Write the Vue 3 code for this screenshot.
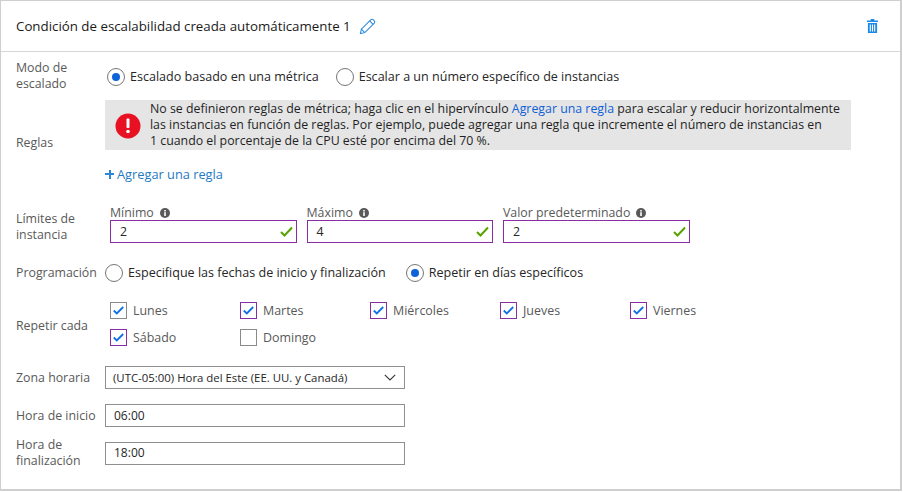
<script setup>
const days = [
  { name: 'Lunes', on: true, touched: false },
  { name: 'Martes', on: true, touched: true },
  { name: 'Miércoles', on: true, touched: true },
  { name: 'Jueves', on: true, touched: true },
  { name: 'Viernes', on: true, touched: true },
  { name: 'Sábado', on: true, touched: true },
  { name: 'Domingo', on: false, touched: false },
]

const limits = [
  { label: 'Mínimo', value: '2' },
  { label: 'Máximo', value: '4' },
  { label: 'Valor predeterminado', value: '2' },
]
</script>

<template>
  <div class="panel">
    <header class="panel-header">
      <span class="panel-title">Condición de escalabilidad creada automáticamente 1</span>
      <svg class="edit-icon" width="17" height="17" viewBox="0 0 18 18" fill="none" stroke="#2b88d8" stroke-width="1.1">
        <path d="M1.5 16.5l1-4.6L12.6 1.8c.7-.7 1.7-.7 2.4 0l1.2 1.2c.7.7.7 1.700 0 2.400L6.100 15.500z" />
        <path d="M11.300 3.100l3.600 3.600M2.500 11.900l3.600 3.600" />
      </svg>
      <svg class="trash-icon" width="11" height="14" viewBox="0 0 12 14" preserveAspectRatio="none" fill="#1e88e5">
        <path d="M4 0h4v1.500h4V3H0V1.500h4zM1 4h10v10H1zM3 5.500v7h1.200v-7zM5.400 5.500v7h1.200v-7zM7.800 5.500v7H9v-7z" fill-rule="evenodd" />
      </svg>
    </header>

    <div class="panel-body">
      <div class="row row-mode">
        <div class="row-label">Modo de<br />escalado</div>
        <div class="radio-group mode-radios">
          <label class="radio"><span class="radio-dot on"></span>Escalado basado en una métrica</label>
          <label class="radio"><span class="radio-dot"></span>Escalar a un número específico de instancias</label>
        </div>
      </div>

      <div class="row row-rules">
        <div class="row-label rules-label">Reglas</div>
        <div class="rules-content">
          <div class="banner">
            <svg class="banner-icon" width="26" height="26" viewBox="0 0 26 26">
              <circle cx="13" cy="13" r="12.500" fill="#e81123" />
              <rect x="11.500" y="5.500" width="3" height="9.500" rx="1" fill="#fff" />
              <circle cx="13" cy="18.500" r="1.800" fill="#fff" />
            </svg>
            <p class="banner-text">
              No se definieron reglas de métrica; haga clic en el hipervínculo <a class="link">Agregar una regla</a> para escalar y reducir horizontalmente<br />
              las instancias en función de reglas. Por ejemplo, puede agregar una regla que incremente el número de instancias en<br />
              1 cuando el porcentaje de la CPU esté por encima del 70 %.
            </p>
          </div>
          <a class="add-rule"><span class="plus"></span>Agregar una regla</a>
        </div>
      </div>

      <div class="row row-limits">
        <div class="row-label">Límites de<br />instancia</div>
        <div class="limits">
          <div v-for="(item, i) in limits" :key="i" class="limit">
            <div class="limit-label">
              {{ item.label }}
              <svg width="10" height="10" viewBox="0 0 10 10">
                <circle cx="5" cy="5" r="5" fill="#595959" />
                <rect x="4.200" y="4.200" width="1.600" height="3.800" fill="#fff" />
                <rect x="4.200" y="2" width="1.600" height="1.500" fill="#fff" />
              </svg>
            </div>
            <div class="limit-input">
              {{ item.value }}
              <svg class="check" width="13" height="11" viewBox="0 0 13 11" fill="none" stroke="#57a300" stroke-width="2">
                <path d="M1 6l3.500 3.500L12 1.500" />
              </svg>
            </div>
          </div>
        </div>
      </div>

      <div class="row row-schedule">
        <div class="row-label">Programación</div>
        <div class="radio-group schedule-radios">
          <label class="radio"><span class="radio-dot"></span>Especifique las fechas de inicio y finalización</label>
          <label class="radio"><span class="radio-dot on"></span>Repetir en días específicos</label>
        </div>
      </div>

      <div class="row row-days">
        <div class="row-label">Repetir cada</div>
        <div class="days">
          <label v-for="d in days" :key="d.name" class="day">
            <span class="checkbox" :class="{ touched: d.touched }">
              <svg v-if="d.on" width="11" height="9" viewBox="0 0 11 9" fill="none" stroke="#0f6fe8" stroke-width="1.800">
                <path d="M.8 4.500l3 3L10.200 1" />
              </svg>
            </span>
            {{ d.name }}
          </label>
        </div>
      </div>

      <div class="row row-field row-zone">
        <div class="row-label">Zona horaria</div>
        <div class="text-field select">
          (UTC-05:00) Hora del Este (EE. UU. y Canadá)
          <svg width="12" height="7" viewBox="0 0 12 7" fill="none" stroke="#333" stroke-width="1.100">
            <path d="M.8.8L6 6l5.200-5.200" />
          </svg>
        </div>
      </div>

      <div class="row row-field row-start">
        <div class="row-label">Hora de inicio</div>
        <div class="text-field time">06:00</div>
      </div>

      <div class="row row-field row-end">
        <div class="row-label">Hora de<br />finalización</div>
        <div class="text-field time">18:00</div>
      </div>
    </div>
  </div>
</template>

<style>
html,
body {
  margin: 0;
  background: #fff;
}
</style>

<style scoped>
.panel {
  box-sizing: border-box;
  width: 902px;
  height: 491px;
  border: 1px solid #cfcfcf;
  border-width: 1px 2px 2px 1px;
  font-family: "Open Sans", "Noto Sans", sans-serif;
  font-size: 12.35px;
  line-height: 16px;
  color: #262626;
  overflow: hidden;
}

.panel-header {
  display: flex;
  align-items: center;
  height: 51px;
  box-sizing: border-box;
  padding: 0 22px 0 15px;
  border-bottom: 1px solid #d6d6d6;
}

.panel-title {
  font-size: 13.3px;
  color: #1a1a1a;
}

.edit-icon {
  margin-left: 8px;
}

.trash-icon {
  margin-left: auto;
}

.panel-body {
  padding-left: 15px;
}

.row {
  display: flex;
}

.row-label {
  width: 89px;
  flex-shrink: 0;
  white-space: nowrap;
  color: #595959;
}

.row-mode {
  height: 48px;
  padding-top: 8px;
  box-sizing: border-box;
}

.radio-group {
  display: flex;
  font-size: 12.55px;
}

.mode-radios {
  gap: 17px;
  padding: 8px 0 15px 2px;
}

.schedule-radios {
  gap: 20px;
}

.radio {
  display: flex;
  align-items: center;
  gap: 5px;
  white-space: nowrap;
}

.radio-dot {
  box-sizing: border-box;
  width: 18px;
  height: 18px;
  border: 1px solid #767676;
  border-radius: 50%;
  display: flex;
  align-items: center;
  justify-content: center;
}

.radio-dot.on::after {
  content: "";
  width: 8px;
  height: 8px;
  border-radius: 50%;
  background: #0f62d8;
}

.row-rules {
  height: 107px;
}

.rules-label {
  padding-top: 35px;
}

.rules-content {
  display: flex;
  flex-direction: column;
  align-items: flex-start;
}

.banner {
  display: flex;
  width: 746px;
  height: 50px;
  box-sizing: border-box;
  padding: 0 0 0 10px;
  background: #e5e5e5;
}

.banner-icon {
  flex-shrink: 0;
  margin: 13px 9px 0 0;
  width: 26px;
  height: 26px;
}

.banner-text {
  margin: 1px 0 0;
  white-space: nowrap;
  color: #1f1f1f;
}

.link {
  color: #0f5fd7;
}

.add-rule {
  display: flex;
  align-items: center;
  margin-top: 16px;
  font-size: 12.8px;
  color: #1f7ac2;
}

.plus {
  width: 9px;
  height: 9px;
  margin-right: 3px;
  background:
    linear-gradient(#2b88d8, #2b88d8) center / 9px 2px no-repeat,
    linear-gradient(#2b88d8, #2b88d8) center / 2px 9px no-repeat;
}

.row-limits {
  height: 47px;
  padding-top: 3px;
  box-sizing: border-box;
}

.row-limits .row-label {
  padding-top: 1px;
}

.limits {
  display: flex;
  gap: 10px;
  padding-left: 5px;
  margin-top: -4px;
}

.limit {
  width: 186.5px;
}

.limit-label {
  display: flex;
  align-items: center;
  gap: 6px;
  height: 14px;
  color: #595959;
}

.limit-input {
  display: flex;
  align-items: center;
  justify-content: space-between;
  box-sizing: border-box;
  height: 23px;
  padding: 0 3px 0 9px;
  border: 1px solid #8a2da5;
  color: #262626;
}

.row-schedule {
  height: 38px;
  align-items: center;
}

.row-days {
  height: 72px;
}

.row-days .row-label {
  padding-top: 26px;
}

.days {
  display: grid;
  grid-template-columns: repeat(5, 130px);
  grid-auto-rows: 27px;
  padding-left: 5px;
  margin-top: 5px;
  font-size: 12.45px;
}

.day {
  display: flex;
  align-items: center;
  gap: 6px;
  color: #595959;
}

.checkbox {
  box-sizing: border-box;
  width: 17px;
  height: 17px;
  border: 1px solid #8a8a8a;
  display: flex;
  align-items: center;
  justify-content: center;
}

.checkbox.touched {
  border-color: #8a2da5;
}

.row-field {
  align-items: center;
}

.text-field {
  box-sizing: border-box;
  width: 300px;
  height: 23px;
  display: flex;
  align-items: center;
  padding-left: 8px;
  border: 1px solid #8f8f8f;
  color: #262626;
}

.select {
  justify-content: space-between;
  padding: 0 8px 0 7px;
  font-size: 11.4px;
}

.time {
  padding-left: 8px;
  font-size: 12px;
}

.row-zone {
  margin-top: 2px;
}

.row-start {
  margin-top: 15px;
}

.row-end {
  margin-top: 10px;
}
</style>
